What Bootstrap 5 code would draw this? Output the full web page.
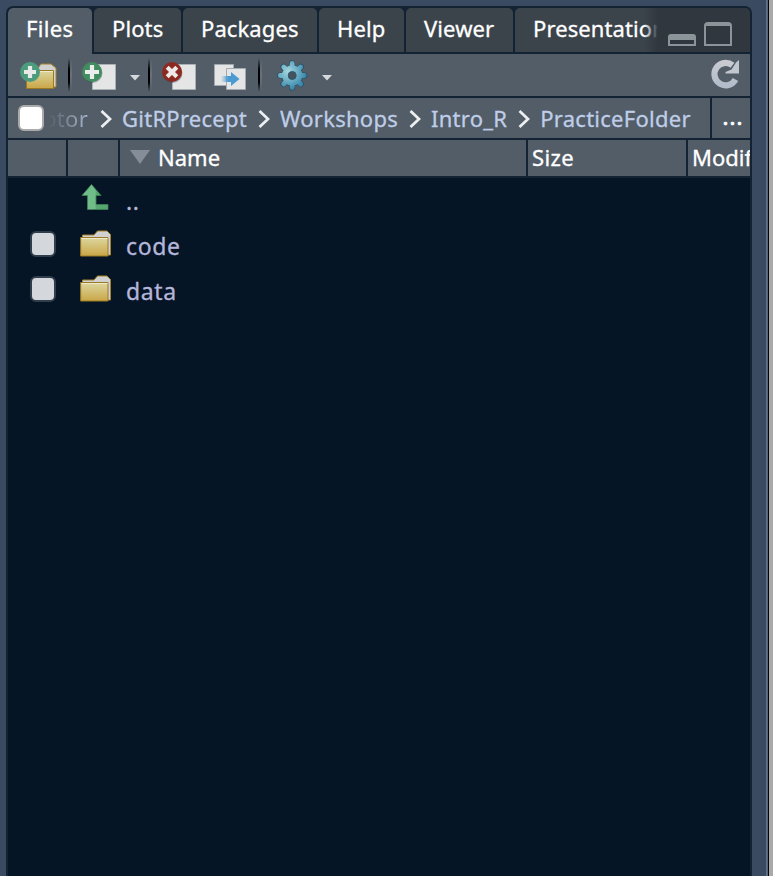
<!DOCTYPE html>
<html lang="en">
<head>
<meta charset="utf-8">
<title>Files</title>
<link href="https://cdn.jsdelivr.net/npm/bootstrap@5.3.0/dist/css/bootstrap.min.css" rel="stylesheet">
<style>
body{background:#3a4b61;font:22px/30px "Noto Sans","Open Sans",sans-serif;color:#fff;height:876px;-webkit-text-stroke:.3px}
.edge{width:7px;background:linear-gradient(90deg,#60708a 0 1px,#56657a 1px 2px,#050505 2px 3px,#a9a9a9 3px)}
.pane{width:746px;margin:6px 0 0 6px;border:2px solid #132333;border-bottom:0;border-radius:7px 7px 0 0;background:#132333}
.tabs{height:46px}
.tab-item{height:44px;line-height:41px;background:#3c444b;border-radius:5px 5px 0 0;margin-right:2px;padding-left:18px;letter-spacing:.1px}
.tab-item.on{background:#525d67;height:46px}
.t1{width:84px;letter-spacing:.3px}.t2{width:87px}.t3{width:134px}.t4{width:85px}.t5{width:107px}.t6{flex:1;margin:0}
.winctl{right:0;top:0;width:106px;height:44px;background:linear-gradient(90deg,#30373e00,#30373e 14px);border-radius:0 5px 0 0}
.bar{height:42px;background:#525d67}
.crumbs{height:40px;margin-top:2px}
.crumbs>div{background:#525d67}
.trail{width:702px;padding-left:10px;color:#bfcde8;line-height:41px;letter-spacing:.26px}
.trail svg{flex:none;margin:2px 10px 0 11px}
.fade-txt{width:45px;padding-right:1px;direction:rtl;overflow:hidden;background:linear-gradient(90deg,#bfcde800 4px,#bfcde8cc 44px);-webkit-background-clip:text;background-clip:text;color:transparent;-webkit-text-stroke:0}
.more{margin-left:2px;padding:3px 0 0 4px;letter-spacing:1.1px;-webkit-text-stroke:.7px}
.box{width:26px;height:26px;border-radius:6px;border:2px solid #aaa;background:#fff;flex:none}
.box.dim{border-color:#303d4b;background:#d4d7dc}
.heads{height:36px;margin-top:2px;line-height:35px}
.heads>div{background:#525d67}
.list-area{background:#051525;margin-top:2px;padding-top:1px;color:#b5b6da}
.file-row{height:45px;line-height:45px}
.c1{width:58px;padding:0 0 5px 22px}.c2{width:50px;padding:0 0 7px 14px}
.fname{padding-left:10px;font-size:23px;letter-spacing:.6px}
</style>
</head>
<body class="d-flex overflow-hidden">
<svg width="0" height="0" class="position-absolute"><defs>
<linearGradient id="gold" x2="0" y2="1"><stop stop-color="#dcd7a0"/><stop offset="1" stop-color="#caa647"/></linearGradient>
<linearGradient id="gr"><stop offset=".5" stop-color="#70bd89"/><stop offset=".55" stop-color="#57a66f"/></linearGradient>
<linearGradient id="bl"><stop stop-color="#4b9bd3" stop-opacity="0"/><stop offset=".4" stop-color="#4b9bd3"/></linearGradient>
<radialGradient id="gear" gradientUnits="userSpaceOnUse" cx="-4" cy="-4" r="18"><stop stop-color="#a4d8de"/><stop offset="1" stop-color="#3988ad"/></radialGradient>
<linearGradient id="sepg" x2="0" y2="1"><stop stop-color="#000" stop-opacity="0"/><stop offset=".35" stop-color="#000"/><stop offset=".7" stop-color="#000"/><stop offset="1" stop-color="#000" stop-opacity="0"/></linearGradient>
<linearGradient id="sepw" x2="0" y2="1"><stop stop-color="#818991" stop-opacity="0"/><stop offset=".5" stop-color="#818991"/><stop offset="1" stop-color="#818991" stop-opacity="0"/></linearGradient>
<linearGradient id="ref" x2="0" y2="1"><stop stop-color="#c8cad0"/><stop offset="1" stop-color="#b2bccb"/></linearGradient>
<symbol id="folder" viewBox="0 0 32 27"><path d="M2.500 8V5H14L17.500 1H27L30.500 4.500V25H27" fill="#d0d1d0" stroke="#a4822b"/><path d="M.7 7.500H28v18.500H.7z" fill="url(#gold)" stroke="#9c7a24"/><path d="M1.500 8.500h26" stroke="#eee9cb"/></symbol>
<symbol id="chev" viewBox="0 0 12 18"><path d="M1.500 1l8.500 8-8.500 8" fill="none" stroke="#eceeef" stroke-width="2.800"/></symbol>
<symbol id="sep" viewBox="0 0 4 34"><path d="M0 0h2v34H0z" fill="url(#sepg)"/><path d="M2.500 0h1v34h-1z" fill="url(#sepw)"/></symbol>
</defs></svg>
<main class="pane d-flex flex-column overflow-hidden flex-shrink-0">
<div class="tabs d-flex position-relative text-nowrap overflow-hidden flex-shrink-0">
<div class="tab-item on t1">Files</div><div class="tab-item t2">Plots</div><div class="tab-item t3">Packages</div><div class="tab-item t4">Help</div><div class="tab-item t5">Viewer</div><div class="tab-item t6 overflow-hidden">Presentation</div>
<div class="winctl position-absolute"><svg class="d-block" width="106" height="44"><path d="M18 0h88v44H18z" fill="#30373e"/><path d="M24 38V29q0-3 3-3h22q3 0 3 3v9zM26 32v4h24v-4z" fill="#8b9498" fill-rule="evenodd"/><path d="M60 38V18q0-4 4-4h20q4 0 4 4v20zM62 18v18h24V18z" fill="#8b9498" fill-rule="evenodd"/></svg></div>
</div>
<div class="bar flex-shrink-0">
<svg class="d-block" width="742" height="42" viewBox="8 54 742 42">
<path d="M38 68l3-4h10l5 4v19h-4" fill="#d0d1d0" stroke="#a4822b"/><path d="M26.500 70.500h27v18h-27z" fill="url(#gold)" stroke="#9c7a24"/><path d="M40 71.500h13" stroke="#eee9cb"/>
<circle cx="30" cy="72" r="10" fill="#4d9b7d"/><path d="M24 72h12M30 66v12" stroke="#e7eae9" stroke-width="4.200"/>
<use href="#sep" x="68" y="58" width="4" height="34"/>
<path d="M92.500 64.500h23v25h-23z" fill="#e5e5e5" stroke="#aab2b8"/><circle cx="92.500" cy="73" r="10" fill="#34404a" opacity=".4"/><circle cx="92" cy="72" r="10" fill="#418d60"/><path d="M85 72h14M92 65v14" stroke="#eaedeb" stroke-width="4.200"/>
<path d="M130 75h10l-5 5.500z" fill="#d6d8db"/>
<use href="#sep" x="148" y="58" width="4" height="34"/>
<path d="M172.500 64.500h23v25h-23z" fill="#e5e5e5" stroke="#aab2b8"/><circle cx="172.500" cy="73" r="10" fill="#34404a" opacity=".4"/><circle cx="172" cy="72" r="10" fill="#8c2920"/><path d="M167.200 67.200l9.600 9.600m0-9.600l-9.600 9.600" stroke="#eee9e8" stroke-width="4.200"/>
<path d="M214.500 64.500h19v21h-19z" fill="#e5e5e5" stroke="#a2aab1"/><path d="M226.500 68.500h19v21h-19z" fill="#e5e5e5" stroke="#a2aab1"/><path d="M221 76h10v-4l8.500 7-8.500 7v-4h-10z" fill="url(#bl)"/>
<use href="#sep" x="258" y="58" width="4" height="34"/>
<g transform="translate(292.200 75.500)"><g fill="none" stroke="#2c4f64" stroke-width="6" stroke-linecap="round"><path d="M0-12.200v24.400M-12.200 0h24.400M-8.700-8.700l17.400 17.400M8.700-8.700l-17.400 17.400" /></g><circle r="10.800" fill="#2c4f64"/><g fill="none" stroke="url(#gear)" stroke-width="4.800" stroke-linecap="round"><path d="M0-12v24.010M-12 0h24M-8.500-8.500l17 17M8.500-8.500l-17 17"/></g><circle r="10.200" fill="url(#gear)"/><circle r="4" fill="#46525d" stroke="#2c5a70"/></g>
<path d="M322 75h10l-5 5.500z" fill="#d6d8db"/>
<path d="M735.500 79.500A11.200 11.200 0 1 1 732.500 65.300" fill="none" stroke="url(#ref)" stroke-width="6.200"/><path d="M739 60v13.500h-13.500v-1.500l6-2.500 4.500-7z" fill="#c2c6cf"/>
</svg></div>
<div class="crumbs d-flex text-nowrap flex-shrink-0"><div class="trail d-flex align-items-center"><span class="box"></span><span class="fade-txt">ptor</span><svg width="12" height="18"><use href="#chev"/></svg><span>GitRPrecept</span><svg width="12" height="18"><use href="#chev"/></svg><span>Workshops</span><svg width="12" height="18"><use href="#chev"/></svg><span>Intro_R</span><svg width="12" height="18"><use href="#chev"/></svg><span>PracticeFolder</span></div><div class="more flex-fill text-center">...</div></div>
<div class="heads d-flex text-nowrap flex-shrink-0"><div style="width:58px"></div><div style="width:50px;margin:0 2px"></div><div class="d-flex" style="width:406px"><svg width="38" height="36"><path d="M10 10h20l-10 14z" fill="#858d99"/></svg>Name</div><div style="width:158px;margin:0 2px;padding-left:4px;letter-spacing:.4px">Size</div><div class="flex-fill overflow-hidden" style="width:0;padding-left:4px">Modified</div></div>
<div class="list-area flex-fill">
<div class="file-row d-flex align-items-center"><div class="c1"></div><div class="c2 d-flex"><svg class="flex-shrink-0" width="34" height="34"><path d="M.5 16.500L10 5.500l9.500 11H14.500v9h12v5H6v-14z" transform="translate(1.500 -2)" fill="url(#gr)" stroke="#3f8556" stroke-width=".8"/></svg></div><span class="fname">..</span></div>
<div class="file-row d-flex align-items-center"><div class="c1 d-flex"><span class="box dim"></span></div><div class="c2 d-flex"><svg class="flex-shrink-0" width="32" height="27"><use href="#folder"/></svg></div><span class="fname">code</span></div>
<div class="file-row d-flex align-items-center"><div class="c1 d-flex"><span class="box dim"></span></div><div class="c2 d-flex"><svg class="flex-shrink-0" width="32" height="27"><use href="#folder"/></svg></div><span class="fname">data</span></div>
</div>
</main>
<div class="edge ms-auto"></div>
<script src="https://cdn.jsdelivr.net/npm/bootstrap@5.3.0/dist/js/bootstrap.bundle.min.js"></script>
</body>
</html>
